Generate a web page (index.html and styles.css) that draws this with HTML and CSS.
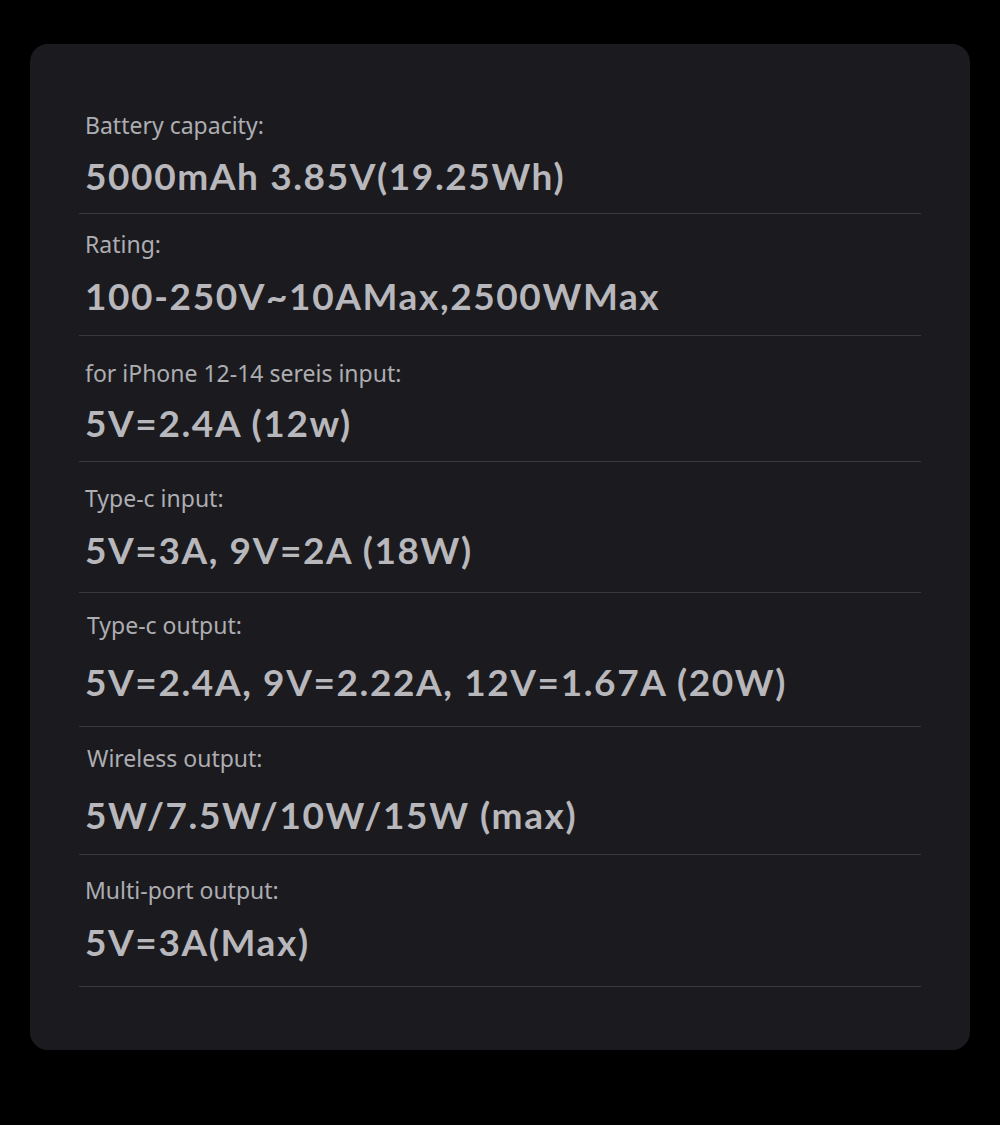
FILE: index.html
```html
<!DOCTYPE html>
<html lang="en">
<head>
<meta charset="utf-8">
<title>Specs</title>
<link rel="stylesheet" href="styles.css">
</head>
<body>
<main class="page">
  <section class="card">
    <div class="row">
      <div class="label">Battery capacity:</div>
      <div class="value">5000mAh 3.85V(19.25Wh)</div>
    </div>
    <div class="row">
      <div class="label">Rating:</div>
      <div class="value">100-250V~10AMax,2500WMax</div>
    </div>
    <div class="row">
      <div class="label">for iPhone 12-14 sereis input:</div>
      <div class="value">5V=2.4A (12w)</div>
    </div>
    <div class="row">
      <div class="label">Type-c input:</div>
      <div class="value">5V=3A, 9V=2A (18W)</div>
    </div>
    <div class="row">
      <div class="label label-shift">Type-c output:</div>
      <div class="value">5V=2.4A, 9V=2.22A, 12V=1.67A (20W)</div>
    </div>
    <div class="row">
      <div class="label label-shift">Wireless output:</div>
      <div class="value">5W/7.5W/10W/15W (max)</div>
    </div>
    <div class="row">
      <div class="label">Multi-port output:</div>
      <div class="value">5V=3A(Max)</div>
    </div>
  </section>
</main>
</body>
</html>
```
FILE: styles.css
```css
html, body {
  margin: 0;
  padding: 0;
  background: #000;
}
.page {
  width: 1000px;
  height: 1125px;
  padding: 44px 30px 0;
  box-sizing: border-box;
}
.card {
  height: 1006px;
  box-sizing: border-box;
  background: #1b1b1f;
  border-radius: 18px;
  padding: 0 49px;
  display: flex;
  flex-direction: column;
}
.row {
  display: flex;
  flex-direction: column;
  border-bottom: 1px solid #38383c;
  padding: 18px 6px 18px;
  gap: 15px;
}
.label {
  font-family: "Noto Sans", sans-serif;
  font-size: 23px;
  line-height: 30px;
  color: #adadb2;
  white-space: nowrap;
}
.label-shift {
  padding-left: 2px;
}
.value {
  font-family: Lato, sans-serif;
  font-weight: 700;
  font-size: 37px;
  line-height: 44px;
  letter-spacing: 1.6px;
  color: #b7b7bc;
  white-space: nowrap;
}
.row:nth-child(1) { padding-top: 66px; gap: 14px; padding-bottom: 15px; }
.row:nth-child(2) { padding-top: 15px; gap: 15px; padding-bottom: 17px; }
.row:nth-child(3) { padding-top: 22px; gap: 13px; padding-bottom: 16px; }
.row:nth-child(4) { padding-top: 21px; gap: 15px; padding-bottom: 20px; }
.row:nth-child(5) { padding-top: 17px; gap: 20px; padding-bottom: 22px; }
.row:nth-child(6) { padding-top: 16px; gap: 20px; padding-bottom: 17px; }
.row:nth-child(7) { padding-top: 20px; gap: 15px; padding-bottom: 22px; }
```
